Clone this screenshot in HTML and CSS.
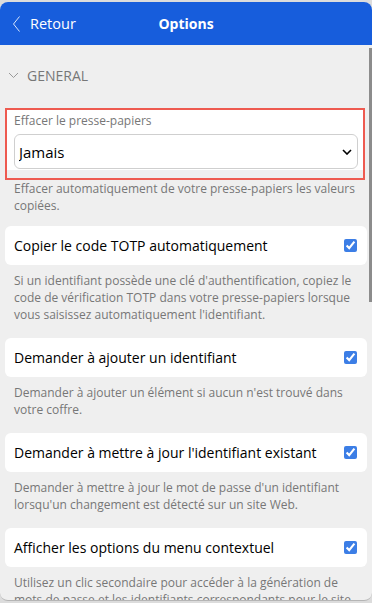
FILE: index.html
```html
<!DOCTYPE html>
<html lang="fr">
  <head>
    <meta charset="UTF-8" />
    <meta name="viewport" content="width=device-width, initial-scale=1.0" />
    <title>Options</title>
    <link rel="stylesheet" href="styles.css">
  </head>
  <body>
    <div class="app">
      <header class="header">
        <button class="back" type="button">
          <svg width="10" height="18" viewBox="0 0 10 18">
            <path d="M7.5 1.5 L1.5 9 L7.5 16.5" fill="none" stroke="currentColor" stroke-width="1" />
          </svg>
          <span>Retour</span>
        </button>
        <h1 class="title">Options</h1>
      </header>

      <div class="body-wrap">
        <main class="content">
          <div class="section-title">
            <svg width="11" height="7" viewBox="0 0 11 7">
              <path d="M1 1 L5.5 5.5 L10 1" fill="none" stroke="currentColor" stroke-width="1" />
            </svg>
            <span>General</span>
          </div>

          <div class="focused">
            <div class="box box-select">
              <label class="select-label" for="clear">Effacer le presse-papiers</label>
              <select id="clear" class="select">
                <option>Jamais</option>
                <option>10 secondes</option>
                <option>20 secondes</option>
                <option>30 secondes</option>
                <option>1 minute</option>
              </select>
            </div>
          </div>
          <p class="help help-tight">Effacer automatiquement de votre presse-papiers les valeurs copiées.</p>

          <label class="box row">
            <span>Copier le code TOTP automatiquement</span>
            <input type="checkbox" class="check" checked />
          </label>
          <p class="help">Si un identifiant possède une clé d'authentification, copiez le code de vérification TOTP dans votre presse-papiers lorsque vous saisissez automatiquement l'identifiant.</p>

          <label class="box row">
            <span>Demander à ajouter un identifiant</span>
            <input type="checkbox" class="check" checked />
          </label>
          <p class="help">Demander à ajouter un élément si aucun n'est trouvé dans votre coffre.</p>

          <label class="box row">
            <span>Demander à mettre à jour l'identifiant existant</span>
            <input type="checkbox" class="check" checked />
          </label>
          <p class="help">Demander à mettre à jour le mot de passe d'un identifiant lorsqu'un changement est détecté sur un site Web.</p>

          <label class="box row">
            <span>Afficher les options du menu contextuel</span>
            <input type="checkbox" class="check" checked />
          </label>
          <p class="help">Utilisez un clic secondaire pour accéder à la génération de mots de passe et les identifiants correspondants pour le site Web.</p>

          <label class="box row">
            <span>Afficher les cartes sur la page de l'onglet</span>
            <input type="checkbox" class="check" checked />
          </label>
          <p class="help">Lister les éléments des cartes de paiement sur la page de l'onglet pour faciliter la saisie automatique.</p>

          <label class="box row">
            <span>Afficher les identités sur la page de l'onglet</span>
            <input type="checkbox" class="check" checked />
          </label>
          <p class="help">Lister les éléments d'identité sur la page de l'onglet pour faciliter la saisie automatique.</p>
        </main>
        <div class="scroll-thumb"></div>
      </div>
    </div>
  </body>
</html>
```

FILE: styles.css
```css
* {
  margin: 0;
  padding: 0;
  box-sizing: border-box;
}

body {
  background: #dcdcdc;
  font-family: "Open Sans", "Liberation Sans", Arial, sans-serif;
  overflow: hidden;
}

.app {
  margin-top: 2px;
  height: 599px;
  background: #efefef;
  border-radius: 8px;
  border-bottom: 1px solid #b5b5b5;
  overflow: hidden;
  display: flex;
  flex-direction: column;
}

/* Header */
.header {
  flex: 0 0 43px;
  background: #175ddc;
  color: #fff;
  display: flex;
  align-items: center;
  position: relative;
}

.back {
  background: none;
  border: 0;
  color: #fff;
  font: inherit;
  font-size: 14.5px;
  display: flex;
  align-items: center;
  gap: 8px;
  padding-left: 12px;
  height: 100%;
  cursor: pointer;
}

.back svg {
  color: #d8e4fb;
}

.title {
  position: absolute;
  left: 0;
  right: 0;
  text-align: center;
  font-size: 14px;
  font-weight: 700;
  pointer-events: none;
}

/* Scrolling content */
.body-wrap {
  flex: 1;
  min-height: 0;
  position: relative;
}

.content {
  height: 100%;
  overflow-y: auto;
  scrollbar-width: none;
  padding: 14px 5px 20px 5px;
}

.content::-webkit-scrollbar {
  display: none;
}

/* overlay scrollbar */
.scroll-thumb {
  position: absolute;
  top: 3px;
  right: 0;
  width: 3px;
  height: 254px;
  background: #8c8c8c;
}

.section-title {
  display: flex;
  align-items: center;
  gap: 8px;
  padding: 7px 3px;
  margin-bottom: 16px;
  color: #777;
  font-size: 14px;
  text-transform: uppercase;
}

.section-title svg {
  color: #999;
}

.box {
  background: #fff;
  border-radius: 6px;
}

/* Select with focus outline */
.focused {
  border: 2px solid #ee5a50;
  padding-bottom: 8px;
  margin-right: 2px;
}

.box-select {
  border-radius: 0;
  padding: 1px 5px 1px 7px;
}

.select-label {
  display: block;
  font-size: 12px;
  color: #777;
  line-height: 20px;
  margin-bottom: 3px;
}

.select {
  display: block;
  width: 100%;
  height: 35px;
  border: 1px solid #cfcfcf;
  border-radius: 6px;
  background: #fff url("data:image/svg+xml,%3Csvg xmlns='http://www.w3.org/2000/svg' width='10' height='6' viewBox='0 0 10 6'%3E%3Cpath d='M1 1 L5 5 L9 1' fill='none' stroke='%23000' stroke-width='1.6'/%3E%3C/svg%3E") no-repeat right 5px center;
  -webkit-appearance: none;
  appearance: none;
  font: inherit;
  font-size: 15px;
  color: #000;
  padding: 0 4px;
  outline: none;
}

.help {
  font-size: 12px;
  line-height: 17px;
  color: #777;
  padding: 7px 9px 15px;
}

.help-tight {
  padding-top: 0;
  padding-bottom: 12px;
}

.row {
  display: flex;
  align-items: center;
  justify-content: space-between;
  height: 39px;
  padding: 0 10px 0 9px;
  font-size: 14px;
  color: #000;
}

.check {
  width: 13px;
  height: 13px;
  accent-color: #3c7ee6;
  margin: 0;
}
```
